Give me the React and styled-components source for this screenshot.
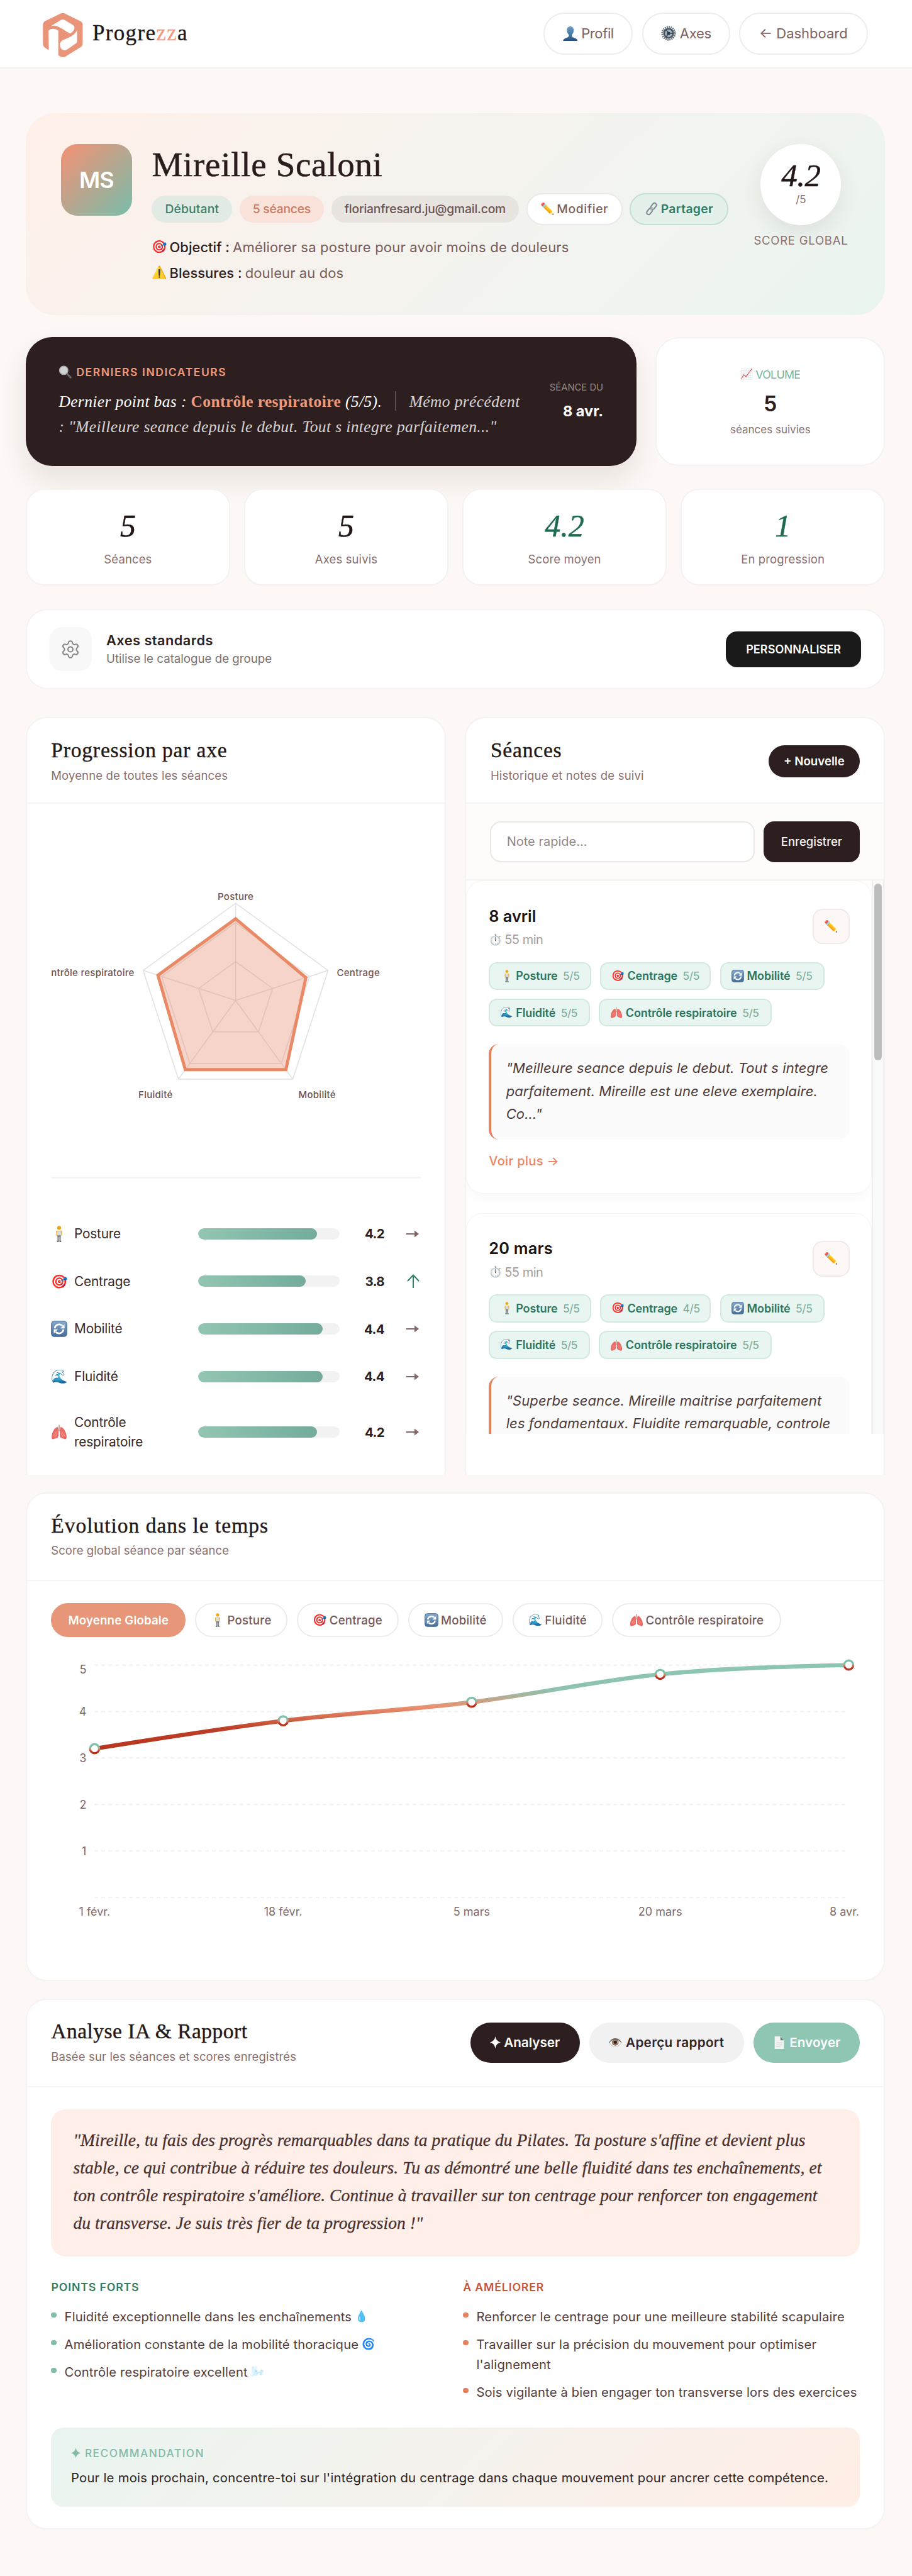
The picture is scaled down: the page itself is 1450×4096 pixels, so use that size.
import React from 'react';
import styled, { createGlobalStyle, css } from 'styled-components';

const SANS = "Inter, 'Liberation Sans', sans-serif";
const SERIF = "'Liberation Serif', serif";

const Global = createGlobalStyle`
  * { box-sizing: border-box; }
  html, body { margin: 0; padding: 0; background: #fdf8f5; }
  body { font-family: ${SANS}; color: #2d1f1f; width: 1450px; -webkit-font-smoothing: antialiased; }
  h1, h2, h3, p, ul { margin: 0; padding: 0; font-weight: 400; }
  ul { list-style: none; }
  button, input { font-family: inherit; margin: 0; }
`;

const card = css`
  background: #fff;
  border: 2px solid #f5f2f1;
`;

const Page = styled.div`
  width: 1450px;
  height: 4096px;
  overflow: hidden;
  background: #fdf8f5;
`;

/* ---------- shared ---------- */

const Emoji = styled.span`
  display: inline-flex;
  flex: none;
  align-self: center;
  align-items: center;
  justify-content: center;
  width: ${p => p.$s}px;
  height: ${p => p.$s}px;
  font-family: 'Noto Color Emoji', ${SANS};
  font-size: ${p => p.$s * 0.82}px;
  line-height: 1;
  letter-spacing: 0;
  font-style: normal;
  font-weight: 400;
  margin-right: ${p => p.$mr || 0}px;
  opacity: ${p => p.$o || 1};
  svg { width: 100%; height: 100%; display: block; }
`;

const Label = styled.span`
  white-space: nowrap;
  letter-spacing: ${p => p.$ls || 0}px;
`;

/* ---------- header ---------- */

const Header = styled.header`
  height: 108.7px;
  padding: 0 70.4px 2px 60.4px;
  display: flex;
  align-items: center;
  justify-content: space-between;
  background: #fff;
  border-bottom: 2px solid #f4f1f0;
`;

const Brand = styled.div`
  display: flex;
  align-items: center;
`;

const BrandName = styled.span`
  font-family: ${SERIF};
  font-size: 35px;
  letter-spacing: 1.35px;
  line-height: 40px;
  margin-left: 3.5px;
  padding-top: 1px;
  color: #1f1818;
  -webkit-text-stroke: 0.35px currentColor;
  em { font-style: normal; color: #ee9d84; }
`;

const Nav = styled.nav`
  display: flex;
  gap: 14.6px;
  padding-top: 2px;
`;

const NavButton = styled.button`
  height: 67px;
  width: ${p => p.$w}px;
  border-radius: 34px;
  border: 2px solid #ededed;
  background: #fff;
  display: flex;
  align-items: center;
  justify-content: center;
  padding: 0;
  font-size: 22px;
  font-weight: 420;
  color: #7d6262;
`;

/* ---------- hero ---------- */

const Main = styled.main`
  padding: 71.3px 42.6px 0 40.7px;
  display: flex;
  flex-direction: column;
`;

const Hero = styled.section`
  height: 321px;
  border-radius: 46px;
  padding: 49px 59px 0 56.3px;
  display: flex;
  background: linear-gradient(135deg, #fff0e8 0%, #f9f1ec 25%, #f3f3ee 55%, #eff4ef 80%, #eaf4ef 100%);
`;

const Avatar = styled.div`
  width: 113px;
  height: 114px;
  border-radius: 26px;
  background: linear-gradient(135deg, #ea9478 8%, #7fbba8 95%);
  color: #fff;
  font-size: 36px;
  font-weight: 600;
  letter-spacing: -0.8px;
  display: flex;
  align-items: center;
  justify-content: center;
`;

const HeroBody = styled.div`
  margin-left: 31.5px;
  width: 940px;
`;

const HeroName = styled.h1`
  font-family: ${SERIF};
  font-size: 55px;
  letter-spacing: 0.7px;
  line-height: 60px;
  padding-top: 3px;
  margin-bottom: 1px;
  color: #2a1c1c;
  -webkit-text-stroke: 0.5px currentColor;
`;

const Tags = styled.div`
  display: flex;
  align-items: center;
  gap: 11.7px;
  height: 51px;
  margin-top: 15px;
`;

const tagTone = {
  green: css`background: #e1ebe3; color: #3f7d66;`,
  coral: css`background: #f8e2d9; color: #cb7a62;`,
  grey: css`background: #e8e5e0; color: #6a5453;`,
  white: css`background: #fff; color: #7a6060; border: 2px solid #ece9e8; height: 51px;`,
  share: css`background: #e4f0ea; color: #2f7a61; border: 2px solid #c3dfd2; height: 51px; font-weight: 600;`,
};

const Tag = styled.span`
  display: flex;
  align-items: center;
  justify-content: center;
  height: 43px;
  width: ${p => p.$w}px;
  border-radius: 26px;
  font-size: 19.3px;
  font-weight: 500;
  ${p => tagTone[p.$tone]}
`;

const HeroFacts = styled.div`
  margin-top: 14.2px;
`;

const Fact = styled.p`
  display: flex;
  align-items: center;
  height: 41px;
  font-size: 22px;
  color: #765c5b;
  white-space: nowrap;
  strong { font-weight: 550; color: #2d1f1f; margin-right: 5px; }
`;

const ScoreBox = styled.div`
  margin-left: auto;
  width: 150px;
  display: flex;
  flex-direction: column;
  align-items: center;
`;

const ScoreDisc = styled.div`
  width: 128px;
  height: 129px;
  border-radius: 50%;
  background: #fff;
  box-shadow: 0 12px 34px rgba(45, 31, 31, 0.09);
  text-align: center;
  padding-top: 24px;
`;

const ScoreValue = styled.div`
  font-family: ${SERIF};
  font-style: italic;
  font-size: 51px;
  line-height: 52px;
  letter-spacing: -0.4px;
  color: #221616;
  -webkit-text-stroke: 0.5px currentColor;
`;

const ScoreMax = styled.div`
  font-size: 17px;
  line-height: 20px;
  margin-top: 2px;
  color: #8a6f6f;
`;

const ScoreLabel = styled.div`
  font-size: 18.5px;
  line-height: 24px;
  margin-top: 12px;
  letter-spacing: 0.75px;
  white-space: nowrap;
  color: #8a7070;
`;

/* ---------- indicators ---------- */

const IndicatorRow = styled.section`
  display: grid;
  grid-template-columns: 971px 1fr;
  column-gap: 30.5px;
  height: 204.2px;
  margin-top: 35.5px;
`;

const DarkCard = styled.div`
  background: #2d1f1f;
  border-radius: 42px;
  padding: 42px 52.6px 0 52.7px;
  display: flex;
  justify-content: space-between;
  box-shadow: 0 22px 44px rgba(45, 31, 31, 0.1);
`;

const DarkTitle = styled.div`
  display: flex;
  align-items: center;
  height: 26px;
  font-size: 17.5px;
  font-weight: 600;
  letter-spacing: 1.56px;
  color: #f09a7b;
`;

const DarkText = styled.div`
  margin-top: 14.8px;
  font-family: ${SERIF};
  font-style: italic;
  font-size: 25.5px;
  line-height: 40px;
  letter-spacing: 0.38px;
  color: #fff;
  white-space: nowrap;
  b { font-style: normal; font-weight: 700; color: #f09a7b; }
`;

const Memo = styled.span`
  color: #d8d3d3;
`;

const Bar = styled.span`
  display: inline-block;
  width: 1.5px;
  height: 31px;
  margin: 0 21px;
  vertical-align: -6px;
  background: #5a4d4d;
`;

const DarkDate = styled.div`
  text-align: right;
  padding-top: 26px;
  small { display: block; font-size: 14.8px; line-height: 24px; color: #958b8b; }
  strong { display: block; font-size: 23.5px; font-weight: 700; line-height: 30px; margin-top: 10.5px; color: #fff; }
`;

const VolumeCard = styled.div`
  ${card}
  border-radius: 38px;
  display: flex;
  flex-direction: column;
  align-items: center;
  padding-top: 44px;
`;

const VolumeTitle = styled.div`
  display: flex;
  align-items: center;
  height: 26px;
  font-size: 17.8px;
  font-weight: 400;
  letter-spacing: -0.7px;
  color: #72b69b;
`;

const VolumeValue = styled.div`
  margin-top: 14px;
  font-size: 34px;
  font-weight: 600;
  line-height: 40px;
`;

const VolumeNote = styled.div`
  margin-top: 8.5px;
  font-size: 17px;
  line-height: 24px;
  color: #8d7070;
`;

/* ---------- stats ---------- */

const Stats = styled.section`
  display: grid;
  grid-template-columns: repeat(4, 1fr);
  column-gap: 21.6px;
  height: 154px;
  margin-top: 36px;
`;

const Stat = styled.div`
  ${card}
  border-radius: 29px;
  text-align: center;
`;

const StatValue = styled.div`
  font-family: ${SERIF};
  font-style: italic;
  font-size: 50px;
  line-height: 54px;
  padding-top: 30.5px;
  color: ${p => (p.$green ? '#1f6b52' : '#221616')};
  -webkit-text-stroke: 0.5px currentColor;
`;

const StatLabel = styled.div`
  font-size: 18.5px;
  line-height: 24px;
  margin-top: 13.5px;
  letter-spacing: 0.12px;
  color: #8a6f6f;
`;

/* ---------- axes ---------- */

const AxesCard = styled.section`
  ${card}
  height: 128.6px;
  margin-top: 37.2px;
  border-radius: 35px;
  padding: 0 36px;
  display: flex;
  align-items: center;
`;

const GearBox = styled.div`
  width: 67.5px;
  height: 70px;
  border-radius: 20px;
  background: #f8f8f8;
  display: flex;
  align-items: center;
  justify-content: center;
`;

const AxesText = styled.div`
  margin-left: 22.8px;
  flex: 1;
  h3 { font-size: 21.8px; font-weight: 600; line-height: 28px; letter-spacing: 0.45px; }
  p { font-size: 18.7px; line-height: 24px; margin-top: 4.5px; color: #787070; }
`;

const PersonaliseButton = styled.button`
  width: 215.5px;
  height: 57px;
  border: 0;
  border-radius: 18px;
  background: #1a1a1a;
  color: #fff;
  font-size: 18px;
  font-weight: 600;
  letter-spacing: 0.1px;
`;

/* ---------- panels ---------- */

const PanelClip = styled.section`
  display: grid;
  grid-template-columns: 668px 668px;
  justify-content: space-between;
  height: 1205px;
  margin-top: 43.7px;
  overflow: hidden;
`;

const Panel = styled.div`
  ${card}
  height: ${p => p.$h}px;
  margin-top: ${p => p.$mt || 0}px;
  border-radius: 33px;
  overflow: hidden;
`;

const PanelHead = styled.div`
  height: ${p => p.$h || 136}px;
  padding: ${p => p.$pt || 30.7}px 38.5px 0;
  border-bottom: 2px solid #f6f4f4;
  display: flex;
  justify-content: space-between;
`;

const PanelTitle = styled.h2`
  font-family: ${SERIF};
  font-size: 33.5px;
  line-height: 40px;
  letter-spacing: ${p => p.$ls}px;
  color: #221818;
  white-space: nowrap;
  -webkit-text-stroke: 0.4px currentColor;
`;

const PanelSub = styled.p`
  font-size: 18.5px;
  line-height: 24px;
  margin-top: ${p => p.$mt || 8.5}px;
  letter-spacing: ${p => p.$ls || 0.12}px;
  color: #8a6f6f;
  white-space: nowrap;
`;

const RadarBody = styled.div`
  padding: 33px 38px 0 38.8px;
`;

const RadarSvg = styled.svg`
  display: block;
  overflow: hidden;
  text { font-family: ${SANS}; font-size: 15px; font-weight: 500; fill: #6d5151; letter-spacing: 0.28px; }
`;

const Rule = styled.div`
  height: 3px;
  background: #f6f5f5;
  margin-bottom: 49.7px;
`;

const AxisRow = styled.div`
  height: ${p => p.$h}px;
  display: grid;
  grid-template-columns: 36.6px 197px 225.2px 70.8px 1fr;
  align-items: center;
`;

const AxisName = styled.span`
  font-size: 20.8px;
  line-height: 31.5px;
  letter-spacing: -0.2px;
  color: #382a2a;
`;

const Track = styled.div`
  height: 18px;
  border-radius: 9px;
  background: #f2f2f2;
  overflow: hidden;
`;

const Fill = styled.div`
  height: 100%;
  border-radius: 9px;
  background: linear-gradient(90deg, #92c6b2, #74ab9c);
`;

const AxisValue = styled.span`
  text-align: right;
  font-size: 20.5px;
  font-weight: 650;
  letter-spacing: -0.6px;
`;

const Trend = styled.span`
  padding-left: 35px;
  display: flex;
  color: ${p => (p.$up ? '#2f8262' : '#846868')};
`;

/* ---------- sessions ---------- */

const NewButton = styled.button`
  width: 145px;
  height: 51px;
  margin-top: 12.3px;
  border: 0;
  border-radius: 26px;
  background: #2d1f1f;
  color: #fff;
  font-size: 18.7px;
  font-weight: 600;
`;

const NoteBar = styled.div`
  height: 122px;
  padding: 27.5px 38.5px 0 37.8px;
  background: #fdfcfa;
  border-bottom: 2px solid #f5f2f1;
  display: flex;
  justify-content: space-between;
`;

const NoteInput = styled.input`
  width: 421px;
  height: 65px;
  border-radius: 17px;
  border: 2px solid #ece7e6;
  background: #fff;
  padding: 0 24.5px;
  font-size: 20px;
  outline: none;
  &::placeholder { color: #918887; opacity: 1; }
`;

const SaveButton = styled.button`
  width: 153px;
  height: 65px;
  border: 0;
  border-radius: 17px;
  background: #2d1f1f;
  color: #f7f2f2;
  font-size: 18.5px;
  font-weight: 500;
`;

const SessionArea = styled.div`
  display: flex;
  height: 879.5px;
  overflow: hidden;
`;

const SessionList = styled.div`
  width: 645px;
  flex: none;
  display: flex;
  flex-direction: column;
  gap: 31px;
  background: #fefefe;
  overflow: hidden;
`;

const ScrollTrack = styled.div`
  flex: 1;
  background: #fafafa;
  border-left: 2px solid #f0eeee;
  border-right: 1px solid #f0eeee;
  padding: 5px 0 0 2px;
`;

const ScrollThumb = styled.div`
  width: 11.5px;
  height: 280.5px;
  border-radius: 6px;
  background: #bdbdbd;
`;

const SessionCard = styled.article`
  flex: none;
  height: 497.5px;
  background: #fff;
  border: 1.5px solid #f6f5f5;
  border-radius: 27px;
  padding: 39.5px 34.8px 0;
  box-shadow: 0 6px 18px rgba(0, 0, 0, 0.025);
`;

const SessionHead = styled.div`
  height: 89px;
  display: flex;
  justify-content: space-between;
`;

const SessionDate = styled.h3`
  font-size: 25.3px;
  font-weight: 600;
  line-height: 32px;
  letter-spacing: ${p => p.$ls}px;
  color: #1d1414;
`;

const Duration = styled.div`
  display: flex;
  align-items: center;
  height: 26px;
  margin-top: 8.6px;
  font-size: 20px;
  letter-spacing: -0.5px;
  color: #a49d9c;
`;

const EditButton = styled.button`
  width: 59px;
  height: 56.5px;
  margin-top: 4px;
  padding: 0;
  border-radius: 16px;
  border: 2px solid #f2eae7;
  background: #fdf8f6;
  display: flex;
  align-items: center;
  justify-content: center;
`;

const Chips = styled.div`
  display: flex;
  flex-wrap: wrap;
  gap: 13.5px 14.2px;
`;

const Chip = styled.span`
  height: 44.6px;
  width: ${p => p.$w}px;
  border-radius: 13px;
  border: 2px solid #d2e9e0;
  background: #e9f5f0;
  display: flex;
  align-items: center;
  padding-left: 16.5px;
  font-size: 18px;
  font-weight: 600;
  color: #2b765e;
  white-space: nowrap;
  i { font-style: normal; font-weight: 400; color: #7aab99; margin-left: 8.5px; font-size: 17.5px; letter-spacing: -0.4px; }
`;

const Quote = styled.blockquote`
  margin: 27.7px 0 0;
  height: 152px;
  border-left: 4px solid #e6835f;
  border-radius: 16px;
  background: #fbfbfb;
  padding: 20px 0 0 23.5px;
  font-style: italic;
  font-size: 22px;
  line-height: 36.7px;
  letter-spacing: 0.09px;
  color: #4d3a3a;
  white-space: pre-line;
`;

const MoreLink = styled.a`
  display: block;
  margin-top: 19.6px;
  font-size: 20px;
  line-height: 28px;
  font-weight: 500;
  letter-spacing: 0.35px;
  color: #ea8461;
`;

/* ---------- evolution ---------- */

const Pills = styled.div`
  display: flex;
  gap: 14.8px;
  padding: 35px 0 0 38.8px;
`;

const Pill = styled.button`
  width: ${p => p.$w}px;
  height: 54px;
  padding: 0;
  border-radius: 27px;
  border: 2px solid ${p => (p.$on ? '#e8967a' : '#ececec')};
  background: ${p => (p.$on ? '#e8967a' : '#fff')};
  color: ${p => (p.$on ? '#fff' : '#745a5a')};
  font-size: 18.7px;
  font-weight: ${p => (p.$on ? 600 : 500)};
  display: flex;
  align-items: center;
  justify-content: center;
`;

const ChartSvg = styled.svg`
  display: block;
  margin: 22.7px 0 0 38.8px;
  text { font-family: ${SANS}; font-size: 18px; fill: #7d6767; }
`;

/* ---------- analysis ---------- */

const Actions = styled.div`
  display: flex;
  gap: 15px;
  margin-top: 5.7px;
`;

const actionTone = {
  dark: css`background: #2d1f1f; color: #fff;`,
  light: css`background: #f1f1f1; color: #332626;`,
  green: css`background: #8fc6b3; color: #fff;`,
};

const ActionButton = styled.button`
  width: ${p => p.$w}px;
  height: 64.5px;
  padding: 0;
  border: 0;
  border-radius: 33px;
  display: flex;
  align-items: center;
  justify-content: center;
  font-size: 20.7px;
  font-weight: 600;
  ${p => actionTone[p.$tone]}
`;

const AnalysisBody = styled.div`
  padding: 35px 38.7px 0 38.8px;
`;

const ReportQuote = styled.blockquote`
  margin: 0;
  height: 234px;
  border-radius: 23px;
  background: #ffefe8;
  padding: 27.5px 0 0 35px;
  font-family: ${SERIF};
  font-style: italic;
  font-size: 27.5px;
  line-height: 44.1px;
  color: #473030;
  -webkit-text-stroke: 0.3px currentColor;
`;

const QuoteLine = styled.div`
  white-space: nowrap;
  letter-spacing: ${p => p.$ls}px;
`;

const Columns = styled.div`
  display: grid;
  grid-template-columns: 654.8px 1fr;
  height: 272px;
  padding-top: 35.5px;
`;

const ListTitle = styled.h3`
  font-size: 17.8px;
  font-weight: 600;
  line-height: 28px;
  letter-spacing: ${p => p.$ls}px;
  color: ${p => p.$c};
  margin-bottom: 16.4px;
`;

const Item = styled.li`
  display: flex;
  font-size: 20.2px;
  line-height: 32px;
  margin-bottom: 12px;
  letter-spacing: ${p => p.$ls}px;
  color: #523c3c;
  white-space: pre;
  &::before {
    content: '';
    flex: none;
    width: 8.5px;
    height: 8.5px;
    border-radius: 50%;
    margin: 9px 12.6px 0 0;
    background: ${p => p.$c};
  }
`;

const Reco = styled.div`
  height: 126px;
  border-radius: 20px;
  padding: 27px 31.4px 0;
  background: linear-gradient(135deg, #e9f4f0 0%, #f1f3ee 30%, #f6f1ec 55%, #fdeee7 90%, #ffeee6 100%);
`;

const RecoTitle = styled.div`
  display: flex;
  align-items: center;
  height: 28px;
  font-size: 17.3px;
  font-weight: 500;
  letter-spacing: 1.5px;
  color: #83bba7;
`;

const RecoText = styled.p`
  margin-top: 10.4px;
  font-size: 20.3px;
  line-height: 30px;
  letter-spacing: 0.25px;
  white-space: nowrap;
  color: #2d1f1f;
`;

/* ---------- icons ---------- */

const Logo = () => (
  <svg width="83" height="83" viewBox="0 0 330 330">
    <path fill="#e99478" fillRule="evenodd" d="M70 273 L48 259 Q33 250 33 233 L33 112 Q33 97 47 89 L143 43 Q158 35 173 43 L270 90 Q284 98 284 112 L284 232 Q284 246 271 254 L175 314 Q152 325 130 305 L130 150 Q105 132 78 142 Q68 147 68 156 Z
      M84 121 Q104 116 122 122 C155 134 180 156 205 168 Q226 156 232 136 Q234 122 224 115 L166 81 Q158 77 150 81 Z
      M249 146 C240 168 218 184 196 194 L158 211 Q138 222 140 243 Q143 272 168 274 Q177 274 186 269 L240 232 Q249 226 249 216 Z" />
  </svg>
);

const Gear = () => (
  <svg width="32" height="33" viewBox="0 0 24 24" fill="none" stroke="#858585" strokeWidth="1.5" strokeLinecap="round" strokeLinejoin="round">
    <path d="M9.67 4.14a2.34 2.34 0 0 1 4.66 0 2.34 2.34 0 0 0 3.32 1.92 2.34 2.34 0 0 1 2.33 4.03 2.34 2.34 0 0 0 0 3.83 2.34 2.34 0 0 1-2.33 4.03 2.34 2.34 0 0 0-3.32 1.92 2.34 2.34 0 0 1-4.66 0 2.34 2.34 0 0 0-3.32-1.92 2.34 2.34 0 0 1-2.33-4.03 2.34 2.34 0 0 0 0-3.83A2.34 2.34 0 0 1 6.35 6.06a2.34 2.34 0 0 0 3.32-1.92" />
    <circle cx="12" cy="12" r="3" />
  </svg>
);

const Star = ({ s = 17, mr = 5 }) => (
  <svg width={s + mr} height={s * 1.12} viewBox={`0 0 ${18 * (s + mr) / s} 20`} fill="currentColor">
    <path d="M9 0 Q10.4 8.4 18 10 Q10.4 11.6 9 20 Q7.6 11.6 0 10 Q7.6 8.4 9 0Z" />
  </svg>
);

const Arrow = ({ up }) => up ? (
  <svg width="22" height="24" viewBox="0 0 22 24" fill="none" stroke="currentColor" strokeWidth="2"><path d="M11 23V2.5M2 12L11 2.5L20 12" /></svg>
) : (
  <svg width="22" height="14" viewBox="0 0 22 14" fill="none" stroke="currentColor" strokeWidth="2"><path d="M0 7H18" /><path d="M13 1.5L20 7L13 12.5Z" fill="currentColor" stroke="none" /></svg>
);

const Bust = () => (
  <svg viewBox="0 0 28 28">
    <defs><linearGradient id="bust" x1="0" y1="0" x2="0" y2="1"><stop offset="0" stopColor="#6d9cc4" /><stop offset="0.6" stopColor="#45779f" /><stop offset="1" stopColor="#1f4a7c" /></linearGradient></defs>
    <path fill="url(#bust)" d="M14 0C18 0 20.5 2.8 20.5 7.2C20.5 11 18.8 14 17 15.8C16.4 18 17 19.6 19 20.6L25 23.2Q27.6 24.6 27.8 28H.2Q.4 24.6 3 23.2L9 20.6C11 19.6 11.6 18 11 15.8C9.2 14 7.5 11 7.5 7.2C7.5 2.8 10 0 14 0Z" />
  </svg>
);

const Cog = () => (
  <svg viewBox="0 0 28 28" fill="none">
    <circle cx="14" cy="14" r="11.8" stroke="#5d6a75" strokeWidth="3.6" strokeDasharray="2.1 1.6" />
    <circle cx="14" cy="14" r="8.4" fill="#9fb4c4" stroke="#48545e" strokeWidth="3" />
    <path d="M14 14L9 6.5M14 14H22.5M14 14L9 21.5" stroke="#39444d" strokeWidth="1.8" />
    <circle cx="14" cy="14" r="3" fill="#2f3a43" />
  </svg>
);

const Chain = () => (
  <svg viewBox="0 0 24 24" fill="none" stroke="#7f8c95" strokeWidth="2.3">
    <rect x="-6" y="-3.4" width="12" height="6.8" rx="3.4" transform="translate(15.5 7.5) rotate(-52)" />
    <rect x="-6" y="-3.4" width="12" height="6.8" rx="3.4" transform="translate(8.5 16.5) rotate(-52)" />
    <path d="M10 14.6L14 9.4" stroke="#b4bdc3" />
  </svg>
);

const Lens = () => (
  <svg viewBox="0 0 24 24">
    <path d="M14.5 14L22 22" stroke="#6f6a6c" strokeWidth="3.4" strokeLinecap="round" />
    <circle cx="9.5" cy="9" r="7.6" fill="#cfd2d4" stroke="#a9abad" strokeWidth="1.8" />
  </svg>
);

const Sync = () => (
  <svg viewBox="0 0 28 28">
    <defs><linearGradient id="sync" x1="0" y1="0" x2="0" y2="1"><stop offset="0" stopColor="#88a9cd" /><stop offset="1" stopColor="#456c99" /></linearGradient></defs>
    <rect x="0.8" y="0.8" width="26.4" height="26.4" rx="5" fill="url(#sync)" stroke="#466b96" strokeWidth="1.2" />
    <path d="M6.6 13A7.6 7.6 0 0 1 19.6 8.7M21.4 15A7.6 7.6 0 0 1 8.4 19.3" fill="none" stroke="#fff" strokeWidth="3" />
    <path d="M23.2 6V13.2H16Z M4.8 22V14.8H12Z" fill="#fff" />
  </svg>
);

const Lungs = () => (
  <svg viewBox="0 0 28 28">
    <path d="M14 2V11M14 10.5L10.5 14M14 10.5L17.5 14" stroke="#c8a79c" strokeWidth="2" fill="none" />
    <path d="M11.2 5.5C6.5 6 1.2 15 1.2 22.5C1.2 26.6 3.2 27 6 25.6C8.4 24.4 11.8 24.6 12.6 21.5C13.2 17 13 5.4 11.2 5.5Z" fill="#ec6a66" />
    <path d="M16.8 5.5C21.5 6 26.8 15 26.8 22.5C26.8 26.6 24.8 27 22 25.6C19.6 24.4 16.2 24.6 15.4 21.5C14.8 17 15 5.4 16.8 5.5Z" fill="#ec6a66" />
    <path d="M4 21L10 13M7.5 22.5L11 16M24 21L18 13M20.5 22.5L17 16" stroke="#f59a93" strokeWidth="1.2" fill="none" />
  </svg>
);

const Stander = () => (
  <svg viewBox="0 0 28 28">
    <circle cx="14" cy="3.6" r="3.4" fill="#eaa916" />
    <path d="M10.4 8.4H17.6Q19.2 8.6 19.2 10.4L18.8 17H17.2V12H10.8V17H9.2L8.8 10.4Q8.8 8.6 10.4 8.4Z" fill="#efb53a" />
    <path d="M11 8.6H17V18H11Z" fill="#d5dbe0" />
    <path d="M11 16.5H17L16.6 26H14.5V19.5H13.5V26H11.4Z" fill="#7c8285" />
    <path d="M10.4 25.6H13.4V27.6H10.4ZM14.6 25.6H17.6V27.6H14.6Z" fill="#55595c" />
  </svg>
);

const Sheet = () => (
  <svg viewBox="0 0 24 24">
    <path d="M4 1H14L20 7V23H4Z" fill="#f2f3f3" />
    <path d="M14 1V8H20Z" fill="#6d7f79" />
    <path d="M7 12H17M7 15.5H17M7 19H14" stroke="#cfd6d3" strokeWidth="1.2" />
  </svg>
);

/* ---------- data ---------- */

const AXES = [
  { icon: <Stander />, name: 'Posture', value: 4.2 },
  { icon: '🎯', name: 'Centrage', value: 3.8, up: true },
  { icon: <Sync />, name: 'Mobilité', value: 4.4 },
  { icon: '🌊', name: 'Fluidité', value: 4.4 },
  { icon: <Lungs />, name: 'Contrôle respiratoire', value: 4.2 },
];

const CHIP_W = [163, 176, 166.3, 160.4, 275.5];
const PILLS_W = [147.3, 161.8, 151.6, 143.3, 268.5];

const SESSIONS = [
  { date: '8 avril', ls: 0, scores: [5, 5, 5, 5, 5], text: '"Meilleure seance depuis le debut. Tout s integre\nparfaitement. Mireille est une eleve exemplaire.\nCo..."' },
  { date: '20 mars', ls: 0.25, scores: [5, 4, 5, 5, 5], text: '"Superbe seance. Mireille maitrise parfaitement\nles fondamentaux. Fluidite remarquable, controle' },
];

const R = 154.6;
const at = (i, f) => {
  const a = (-90 + i * 72) * Math.PI / 180;
  return [293.6 + Math.cos(a) * R * f, 279.8 + Math.sin(a) * R * f];
};
const ring = f => [0, 1, 2, 3, 4].map(i => at(i, f).map(v => v.toFixed(1)).join(',')).join(' ');

const Radar = () => (
  <RadarSvg width="588" height="560" viewBox="0 0 588 560">
    <g fill="none" stroke="#e2e2e2" strokeWidth="1.6">
      {[0.4, 0.8, 1].map(f => <polygon key={f} points={ring(f)} />)}
      {AXES.map((_, i) => { const [x, y] = at(i, 1); return <line key={i} x1="293.6" y1="279.8" x2={x} y2={y} />; })}
    </g>
    <polygon points={AXES.map((a, i) => at(i, a.value / 5).join(',')).join(' ')} fill="rgba(232,137,108,0.36)" stroke="#e98966" strokeWidth="5" />
    <text x="293.6" y="119.5" textAnchor="middle">Posture</text>
    <text x="454.5" y="241">Centrage</text>
    <text x="393.5" y="435.3">Mobilité</text>
    <text x="193.5" y="435.3" textAnchor="end">Fluidité</text>
    <text x="132.6" y="241" textAnchor="end">Contrôle respiratoire</text>
  </RadarSvg>
);

const SCORES = [3.2, 3.8, 4.2, 4.8, 5];
const DATES = ['1 févr.', '18 févr.', '5 mars', '20 mars', '8 avr.'];
const PX = i => 69.4 + i * 299.75;
const PY = v => 391 - v * 73.9;

const curve = () => {
  const ys = SCORES.map(PY);
  const s = ys.slice(1).map((y, i) => y - ys[i]);
  const m = ys.map((_, i) => (i > 0 && i < 4 ? Math.sign(s[i]) * 2 * Math.min(Math.abs(s[i - 1]), Math.abs(s[i]), Math.abs(s[i - 1] + s[i]) / 4) : 0));
  m[0] = (3 * s[0] - m[1]) / 2;
  m[4] = (3 * s[3] - m[3]) / 2;
  let d = `M${PX(0)} ${ys[0]}`;
  for (let i = 0; i < 4; i++) {
    d += ` C${PX(i) + 99.9} ${ys[i] + m[i] / 3} ${PX(i + 1) - 99.9} ${ys[i + 1] - m[i + 1] / 3} ${PX(i + 1)} ${ys[i + 1]}`;
  }
  return d;
};

const Evolution = () => (
  <ChartSvg width="1300" height="460" viewBox="0 0 1300 460">
    <defs>
      <linearGradient id="trend" x1="0" y1="0" x2="0" y2="1">
        <stop offset="0" stopColor="#8cc6b3" />
        <stop offset="0.3" stopColor="#8cc2ae" />
        <stop offset="0.5" stopColor="#ea9270" />
        <stop offset="0.76" stopColor="#bd3f27" />
        <stop offset="1" stopColor="#b8341f" />
      </linearGradient>
      <linearGradient id="dot" x1="0" y1="0" x2="0" y2="1">
        <stop offset="0" stopColor="#7fc0ab" />
        <stop offset="0.35" stopColor="#7fc0ab" />
        <stop offset="0.55" stopColor="#dd8060" />
        <stop offset="0.8" stopColor="#b8341f" />
      </linearGradient>
    </defs>
    {[0, 1, 2, 3, 4, 5].map(v => (
      <line key={v} x1="69.4" x2="1268.4" y1={PY(v)} y2={PY(v)} stroke="#efefef" strokeWidth="2" strokeDasharray="5.5 5.5" />
    ))}
    {[1, 2, 3, 4, 5].map(v => (
      <text key={v} x="56.4" y={v === 5 ? 34.5 : PY(v) + 6.8} textAnchor="end">{v}</text>
    ))}
    {DATES.map((d, i) => (
      <text key={d} x={i === 4 ? 1285 : PX(i)} y="419.8" textAnchor={i === 4 ? 'end' : 'middle'}>{d}</text>
    ))}
    <path d={curve()} fill="none" stroke="url(#trend)" strokeWidth="6.6" strokeLinecap="round" />
    {SCORES.map((v, i) => <circle key={i} cx={PX(i)} cy={PY(v)} r="7.2" fill="#fff" stroke="url(#dot)" strokeWidth="3.4" />)}
  </ChartSvg>
);

export default function App() {
  return (
    <Page>
      <Global />
      <Header>
        <Brand><Logo /><BrandName>Progre<em>zz</em>a</BrandName></Brand>
        <Nav>
          <NavButton $w={142.4}><Emoji $s={23.5} $mr={6}><Bust /></Emoji><Label $ls={-0.4}>Profil</Label></NavButton>
          <NavButton $w={139.6}><Emoji $s={24} $mr={6}><Cog /></Emoji><Label $ls={-0.2}>Axes</Label></NavButton>
          <NavButton $w={204.4}><Label>← Dashboard</Label></NavButton>
        </Nav>
      </Header>
      <Main>
        <Hero>
          <Avatar>MS</Avatar>
          <HeroBody>
            <HeroName>Mireille Scaloni</HeroName>
            <Tags>
              <Tag $tone="green" $w={127.7}><Label $ls={0.15}>Débutant</Label></Tag>
              <Tag $tone="coral" $w={134}><Label $ls={-0.25}>5 séances</Label></Tag>
              <Tag $tone="grey" $w={298.7}><Label $ls={-0.2}>florianfresard.ju@gmail.com</Label></Tag>
              <Tag $tone="white" $w={152.6}><Emoji $s={22} $mr={4}>✏️</Emoji><Label $ls={0.6}>Modifier</Label></Tag>
              <Tag $tone="share" $w={156.3}><Emoji $s={22} $mr={4}><Chain /></Emoji><Label $ls={0.35}>Partager</Label></Tag>
            </Tags>
            <HeroFacts>
              <Fact><Emoji $s={24} $mr={4}>🎯</Emoji><strong>Objectif :</strong><Label $ls={0.2}>Améliorer sa posture pour avoir moins de douleurs</Label></Fact>
              <Fact><Emoji $s={24} $mr={4}>⚠️</Emoji><strong>Blessures :</strong><Label $ls={0.1}>douleur au dos</Label></Fact>
            </HeroFacts>
          </HeroBody>
          <ScoreBox>
            <ScoreDisc><ScoreValue>4.2</ScoreValue><ScoreMax>/5</ScoreMax></ScoreDisc>
            <ScoreLabel>SCORE GLOBAL</ScoreLabel>
          </ScoreBox>
        </Hero>

        <IndicatorRow>
          <DarkCard>
            <div>
              <DarkTitle><Emoji $s={21} $mr={7}><Lens /></Emoji>DERNIERS INDICATEURS</DarkTitle>
              <DarkText>
                Dernier point bas : <b>Contrôle respiratoire</b> (5/5).<Bar /><Memo>Mémo précédent<br />: "Meilleure seance depuis le debut. Tout s integre parfaitemen..."</Memo>
              </DarkText>
            </div>
            <DarkDate><small>SÉANCE DU</small><strong>8 avr.</strong></DarkDate>
          </DarkCard>
          <VolumeCard>
            <VolumeTitle><Emoji $s={20} $mr={4}>📈</Emoji>VOLUME</VolumeTitle>
            <VolumeValue>5</VolumeValue>
            <VolumeNote>séances suivies</VolumeNote>
          </VolumeCard>
        </IndicatorRow>

        <Stats>
          <Stat><StatValue>5</StatValue><StatLabel>Séances</StatLabel></Stat>
          <Stat><StatValue>5</StatValue><StatLabel>Axes suivis</StatLabel></Stat>
          <Stat><StatValue $green>4.2</StatValue><StatLabel>Score moyen</StatLabel></Stat>
          <Stat><StatValue $green>1</StatValue><StatLabel>En progression</StatLabel></Stat>
        </Stats>

        <AxesCard>
          <GearBox><Gear /></GearBox>
          <AxesText><h3>Axes standards</h3><p>Utilise le catalogue de groupe</p></AxesText>
          <PersonaliseButton>PERSONNALISER</PersonaliseButton>
        </AxesCard>

        <PanelClip>
          <Panel $h={1229}>
            <PanelHead>
              <div><PanelTitle $ls={0.85}>Progression par axe</PanelTitle><PanelSub $ls={0.16}>Moyenne de toutes les séances</PanelSub></div>
            </PanelHead>
            <RadarBody>
              <Radar />
              <Rule />
              {AXES.map((a, i) => (
                <AxisRow key={a.name} $h={i === 4 ? 101.6 : 75.7}>
                  <Emoji $s={26}>{a.icon}</Emoji>
                  <AxisName>{i === 4 ? <>Contrôle<br />respiratoire</> : a.name}</AxisName>
                  <Track><Fill style={{ width: `${a.value * 20}%` }} /></Track>
                  <AxisValue>{a.value}</AxisValue>
                  <Trend $up={a.up}><Arrow up={a.up} /></Trend>
                </AxisRow>
              ))}
            </RadarBody>
          </Panel>

          <Panel $h={1229}>
            <PanelHead>
              <div><PanelTitle $ls={0.8}>Séances</PanelTitle><PanelSub $ls={0.21}>Historique et notes de suivi</PanelSub></div>
              <NewButton>+ Nouvelle</NewButton>
            </PanelHead>
            <NoteBar>
              <NoteInput placeholder="Note rapide..." />
              <SaveButton>Enregistrer</SaveButton>
            </NoteBar>
            <SessionArea>
              <SessionList>
                {SESSIONS.map(s => (
                  <SessionCard key={s.date}>
                    <SessionHead>
                      <div>
                        <SessionDate $ls={s.ls}>{s.date}</SessionDate>
                        <Duration><Emoji $s={21} $mr={4}>⏱️</Emoji>55 min</Duration>
                      </div>
                      <EditButton><Emoji $s={22}>✏️</Emoji></EditButton>
                    </SessionHead>
                    <Chips>
                      {AXES.map((a, i) => (
                        <Chip key={a.name} $w={CHIP_W[i]}><Emoji $s={20} $mr={4.5}>{a.icon}</Emoji><Label $ls={-0.1}>{a.name}</Label><i>{s.scores[i]}/5</i></Chip>
                      ))}
                    </Chips>
                    <Quote>{s.text}</Quote>
                    <MoreLink>Voir plus →</MoreLink>
                  </SessionCard>
                ))}
              </SessionList>
              <ScrollTrack><ScrollThumb /></ScrollTrack>
            </SessionArea>
          </Panel>
        </PanelClip>

        <Panel $h={777} $mt={28}>
          <PanelHead $h={139} $pt={30.5}>
            <div><PanelTitle $ls={1}>Évolution dans le temps</PanelTitle><PanelSub $mt={7.3} $ls={0.07}>Score global séance par séance</PanelSub></div>
          </PanelHead>
          <Pills>
            <Pill $on $w={213.6}><Label $ls={0.15}>Moyenne Globale</Label></Pill>
            {AXES.map((a, i) => (
              <Pill key={a.name} $w={PILLS_W[i]}><Emoji $s={22} $mr={4}>{a.icon}</Emoji><Label $ls={0.2}>{a.name}</Label></Pill>
            ))}
          </Pills>
          <Evolution />
        </Panel>

        <Panel $h={844} $mt={27.5}>
          <PanelHead $h={139} $pt={30.2}>
            <div><PanelTitle $ls={0.5}>Analyse IA & Rapport</PanelTitle><PanelSub $mt={8.5} $ls={0.13}>Basée sur les séances et scores enregistrés</PanelSub></div>
            <Actions>
              <ActionButton $tone="dark" $w={174}><Star />Analyser</ActionButton>
              <ActionButton $tone="light" $w={246}><Emoji $s={22} $mr={5}>👁️</Emoji><Label $ls={0.3}>Aperçu rapport</Label></ActionButton>
              <ActionButton $tone="green" $w={169.2}><Emoji $s={22} $mr={5}><Sheet /></Emoji>Envoyer</ActionButton>
            </Actions>
          </PanelHead>
          <AnalysisBody>
            <ReportQuote>
              <QuoteLine $ls={0.05}>"Mireille, tu fais des progrès remarquables dans ta pratique du Pilates. Ta posture s'affine et devient plus</QuoteLine>
              <QuoteLine $ls={0.08}>stable, ce qui contribue à réduire tes douleurs. Tu as démontré une belle fluidité dans tes enchaînements, et</QuoteLine>
              <QuoteLine $ls={0.1}>ton contrôle respiratoire s'améliore. Continue à travailler sur ton centrage pour renforcer ton engagement</QuoteLine>
              <QuoteLine $ls={0.02}>du transverse. Je suis très fier de ta progression !"</QuoteLine>
            </ReportQuote>
            <Columns>
              <div>
                <ListTitle $c="#347d60" $ls={0.8}>POINTS FORTS</ListTitle>
                <ul>
                  <Item $c="#7fbda6" $ls={0.16}>Fluidité exceptionnelle dans les enchaînements <Emoji $s={21}>💧</Emoji></Item>
                  <Item $c="#7fbda6" $ls={0.16}>Amélioration constante de la mobilité thoracique <Emoji $s={21}>🌀</Emoji></Item>
                  <Item $c="#7fbda6" $ls={0.16}>Contrôle respiratoire excellent <Emoji $s={21} $o={0.5}>🌬️</Emoji></Item>
                </ul>
              </div>
              <div>
                <ListTitle $c="#c35a3f" $ls={0.8}>À AMÉLIORER</ListTitle>
                <ul>
                  <Item $c="#e5825f" $ls={0.2}>Renforcer le centrage pour une meilleure stabilité scapulaire</Item>
                  <Item $c="#e5825f" $ls={0.2}>{"Travailler sur la précision du mouvement pour optimiser\nl'alignement"}</Item>
                  <Item $c="#e5825f" $ls={0.15}>Sois vigilante à bien engager ton transverse lors des exercices</Item>
                </ul>
              </div>
            </Columns>
            <Reco>
              <RecoTitle><Star s={15} mr={7} />RECOMMANDATION</RecoTitle>
              <RecoText>Pour le mois prochain, concentre-toi sur l'intégration du centrage dans chaque mouvement pour ancrer cette compétence.</RecoText>
            </Reco>
          </AnalysisBody>
        </Panel>
      </Main>
    </Page>
  );
}
